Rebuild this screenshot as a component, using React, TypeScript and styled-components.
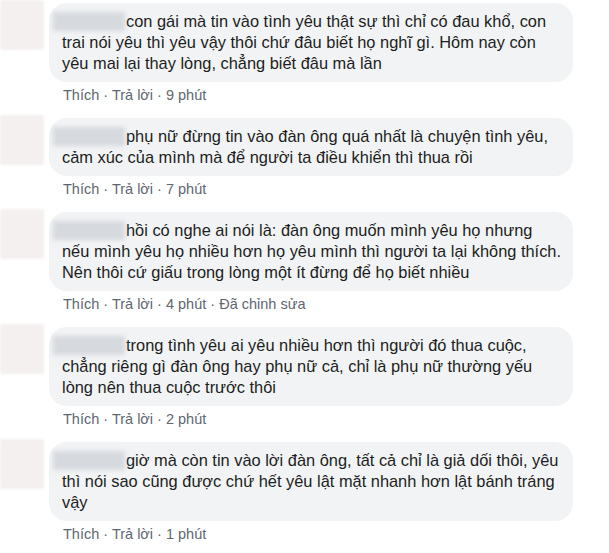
import React from 'react';
import styled, { createGlobalStyle } from 'styled-components';

const GlobalStyle = createGlobalStyle`
  html, body {
    margin: 0;
    padding: 0;
    background: #ffffff;
  }
  body {
    font-family: "Liberation Sans", Arial, sans-serif;
  }
`;

const List = styled.div`
  width: 609px;
  display: flex;
  flex-direction: column;
`;

const CommentRow = styled.div`
  display: flex;
  align-items: flex-start;
  margin-bottom: 12px;
`;

const Avatar = styled.div`
  width: 44px;
  height: 50px;
  flex-shrink: 0;
  margin-right: 5px;
  background: #f5f0f0;
  border-radius: 2px;
  filter: blur(1px);
`;

const Body = styled.div`
  display: flex;
  flex-direction: column;
  padding-top: 3px;
`;

const Bubble = styled.div`
  width: 497px;
  background: #f2f3f5;
  border-radius: 18px;
  padding: 8px 14px 8px 13px;
  color: #1c1e21;
  font-size: 16.4px;
  line-height: 21px;
  white-space: nowrap;
`;

const NameBlur = styled.span`
  display: inline-block;
  width: 72px;
  height: 19px;
  margin: 0 1px 0 -9px;
  vertical-align: -4px;
  background: #d6d9de;
  filter: blur(2px);
`;

const Actions = styled.div`
  margin-top: 5px;
  padding-left: 14px;
  font-size: 14.5px;
  line-height: 16px;
  color: #606770;
`;

type Comment = {
  lines: string[];
  time: string;
  edited?: boolean;
};

const comments: Comment[] = [
  {
    lines: [
      'con gái mà tin vào tình yêu thật sự thì chỉ có đau khổ, con',
      'trai nói yêu thì yêu vậy thôi chứ đâu biết họ nghĩ gì. Hôm nay còn',
      'yêu mai lại thay lòng, chẳng biết đâu mà lần',
    ],
    time: '9 phút',
  },
  {
    lines: [
      'phụ nữ đừng tin vào đàn ông quá nhất là chuyện tình yêu,',
      'cảm xúc của mình mà để người ta điều khiển thì thua rồi',
    ],
    time: '7 phút',
  },
  {
    lines: [
      'hồi có nghe ai nói là: đàn ông muốn mình yêu họ nhưng',
      'nếu mình yêu họ nhiều hơn họ yêu mình thì người ta lại không thích.',
      'Nên thôi cứ giấu trong lòng một ít đừng để họ biết nhiều',
    ],
    time: '4 phút',
    edited: true,
  },
  {
    lines: [
      'trong tình yêu ai yêu nhiều hơn thì người đó thua cuộc,',
      'chẳng riêng gì đàn ông hay phụ nữ cả, chỉ là phụ nữ thường yếu',
      'lòng nên thua cuộc trước thôi',
    ],
    time: '2 phút',
  },
  {
    lines: [
      'giờ mà còn tin vào lời đàn ông, tất cả chỉ là giả dối thôi, yêu',
      'thì nói sao cũng được chứ hết yêu lật mặt nhanh hơn lật bánh tráng',
      'vậy',
    ],
    time: '1 phút',
  },
];

const App: React.FC = () => {
  return (
    <>
      <GlobalStyle />
      <List>
        {comments.map((c, i) => (
          <CommentRow key={i}>
            <Avatar />
            <Body>
              <Bubble>
                <NameBlur />
                {c.lines.map((line, j) => (
                  <React.Fragment key={j}>
                    {j > 0 && <br />}
                    {line}
                  </React.Fragment>
                ))}
              </Bubble>
              <Actions>
                {['Thích', 'Trả lời', c.time, ...(c.edited ? ['Đã chỉnh sửa'] : [])].join(' · ')}
              </Actions>
            </Body>
          </CommentRow>
        ))}
      </List>
    </>
  );
};

export default App;
